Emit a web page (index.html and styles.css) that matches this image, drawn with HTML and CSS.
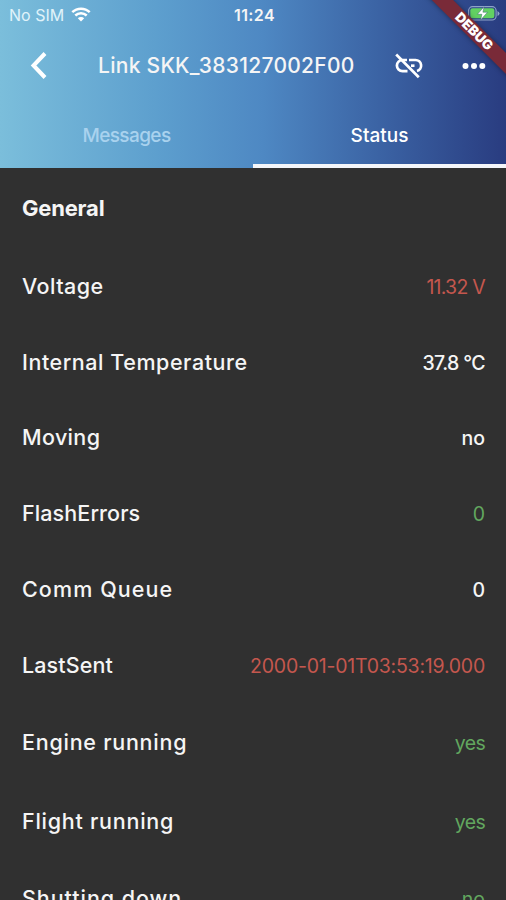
FILE: index.html
```
<!DOCTYPE html>
<html lang="en">
<head>
    <meta charset="UTF-8">
    <meta name="viewport" content="width=device-width, initial-scale=1.0">
    <title>Link Status</title>
    <link rel="stylesheet" href="styles.css">
</head>
<body>
    <div class="screen">
        <header class="header">
            <!-- Status bar -->
            <div class="status-bar">
                <div class="carrier">
                    <span class="carrier-name">No SIM</span>
                    <svg class="wifi" viewBox="0 0 20 15" width="20" height="15">
                        <path d="M1.3 5.2a12.6 12.6 0 0 1 17.4 0M4.3 8.5a8.2 8.2 0 0 1 11.4 0" fill="none" stroke="#fff" stroke-width="2.5"/>
                        <path d="M6.8 11.300a4.600 4.600 0 0 1 6.400 0L10 14.600z" fill="#fff"/>
                    </svg>
                </div>
                <span class="clock">11:24</span>
                <div class="power">
                    <svg class="battery" viewBox="0 0 33 15" width="33" height="15">
                        <rect x="1.6" y=".6" width="27.5" height="13.4" rx="4" fill="none" stroke="#8fa3c8" stroke-width="1.1"/>
                        <rect x="3.3" y="2.3" width="24.1" height="10" rx="2.3" fill="#62d162"/>
                        <path d="M30.5 5v5q2-1 2-2.5T30.5 5z" fill="#8fa3c8"/>
                        <path d="M17 .8l-6.600 7.500h4.500l-1.300 5.700 6.900-7.800h-4.600z" fill="#fff" stroke="#3c6a70" stroke-width=".5"/>
                    </svg>
                </div>
            </div>

            <!-- Title bar -->
            <div class="title-bar">
                <svg class="back" viewBox="0 0 18 28" width="18" height="28">
                    <path d="M16 1.5L4.5 13.5l11.5 12" fill="none" stroke="#fff" stroke-width="4"/>
                </svg>
                <h1 class="title">Link SKK_383127002F00</h1>
                <svg class="unlink" viewBox="0 0 30 26" width="30" height="26">
                    <g fill="none" stroke="#fff" stroke-width="2.7">
                        <path d="M13 7H8.5a5.6 5.6 0 0 0 0 11.200H13.500"/>
                        <path d="M15 7h6.500a5.600 5.600 0 0 1 1.500 11"/>
                        <path d="M17 12.700h3.500"/>
                        <path d="M2.200 1.500l22.600 22.800"/>
                    </g>
                </svg>
                <svg class="more" viewBox="0 0 24 8" width="24" height="8">
                    <circle cx="3.5" cy="4" r="3" fill="#fff"/>
                    <circle cx="12" cy="4" r="3" fill="#fff"/>
                    <circle cx="20.3" cy="4" r="3" fill="#fff"/>
                </svg>
            </div>

            <nav class="tabs">
                <a class="tab"><span class="messages">Messages</span></a>
                <a class="tab active"><span>Status</span></a>
            </nav>
            <div class="debug">DEBUG</div>
        </header>

        <!-- Values -->
        <main class="list">
            <h2 class="section">General</h2>
            <div class="row"><span class="label voltage">Voltage</span><span class="value red volts">11.32 V</span></div>
            <div class="row"><span class="label temperature">Internal Temperature</span><span class="value degrees">37.8 °C</span></div>
            <div class="row"><span class="label moving">Moving</span><span class="value">no</span></div>
            <div class="row"><span class="label errors">FlashErrors</span><span class="value green">0</span></div>
            <div class="row"><span class="label queue">Comm Queue</span><span class="value">0</span></div>
            <div class="row"><span class="label sent">LastSent</span><span class="value red date">2000-01-01T03:53:19.000</span></div>
            <div class="row tall"><span class="label engine">Engine running</span><span class="value green yes">yes</span></div>
            <div class="row tall"><span class="label flight">Flight running</span><span class="value green yes">yes</span></div>
            <div class="row last"><span class="label shutting">Shutting down</span><span class="value green">no</span></div>
        </main>
    </div>
</body>
</html>
```

FILE: styles.css
```
* {
    box-sizing: border-box;
}

body {
    margin: 0;
    background: #303030;
    color: #f5f5f5;
    font-family: Inter, "Liberation Sans", sans-serif;
}

.screen {
    height: 900px;
    overflow: hidden;
}

.header {
    position: relative;
    display: flex;
    flex-direction: column;
    height: 168px;
    overflow: hidden;
    background: linear-gradient(to right, #7bbedb 0%, #5d9fce 31%, #4e88c3 52%, #3b63a4 75%, #293c80 100%);
}

/* Status bar */
.status-bar {
    display: grid;
    grid-template-columns: 1fr auto 1fr;
    align-items: center;
    height: 29px;
    padding: 0 6px 0 9px;
    font-size: 16px;
}

.carrier {
    display: flex;
    align-items: center;
    gap: 7px;
    color: #e0f3fa;
}

.clock {
    font-weight: 600;
    letter-spacing: .4px;
}

.power {
    display: flex;
    justify-content: flex-end;
    padding-bottom: 2px;
}

/* Title bar */
.title-bar {
    display: flex;
    align-items: center;
    height: 73px;
    padding: 0 20px 0 29px;
}

.title {
    flex: 1;
    margin: 0 0 0 51px;
    font-size: 21px;
    font-weight: 500;
    letter-spacing: .28px;
    white-space: nowrap;
}

.unlink {
    margin-right: 38px;
}

/* Tabs */
.tabs {
    display: flex;
    flex: 1;
}

.tab {
    flex: 1;
    padding-top: 22px;
    font-size: 19px;
    font-weight: 500;
    line-height: 24px;
    text-align: center;
    color: #a9d2ee;
}

.messages {
    letter-spacing: -.6px;
}

.tab.active {
    color: #fff;
    border-bottom: 4px solid #f4f6fa;
}

.debug {
    position: absolute;
    top: 24px;
    left: 414px;
    width: 120px;
    height: 15px;
    background: #792a38;
    color: #fff;
    font-size: 13.5px;
    font-weight: 900;
    line-height: 15px;
    text-align: center;
    transform: rotate(45deg);
    box-shadow: 0 0 5px rgba(0, 0, 0, .4);
}

/* List */
.list {
    padding: 0 21px 0 22px;
}

.section {
    height: 80px;
    margin: 0;
    font-size: 22px;
    font-weight: 700;
    letter-spacing: -.2px;
    line-height: 80px;
}

.row {
    display: flex;
    justify-content: space-between;
    align-items: center;
    height: 75.8px;
    white-space: nowrap;
}

.tall {
    height: 78.7px;
}

.last {
    height: 75px;
}

.label {
    font-size: 21.5px;
    font-weight: 500;
}

.value {
    padding-top: 2px;
    font-size: 19.5px;
    font-weight: 500;
}

.red {
    color: #c4574e;
    font-weight: 400;
}

.green {
    color: #62a75f;
    font-weight: 400;
}

/* Tracking */
.voltage {
    letter-spacing: .45px;
}

.temperature {
    letter-spacing: .55px;
}

.moving {
    letter-spacing: .35px;
}

.errors,
.sent {
    letter-spacing: .1px;
}

.queue {
    letter-spacing: 1.1px;
}

.engine,
.flight {
    letter-spacing: .75px;
}

.shutting {
    letter-spacing: .95px;
}

.volts {
    letter-spacing: -.75px;
}

.degrees {
    letter-spacing: -.6px;
}

.date {
    letter-spacing: -.23px;
}

.yes {
    letter-spacing: -.7px;
}
```
